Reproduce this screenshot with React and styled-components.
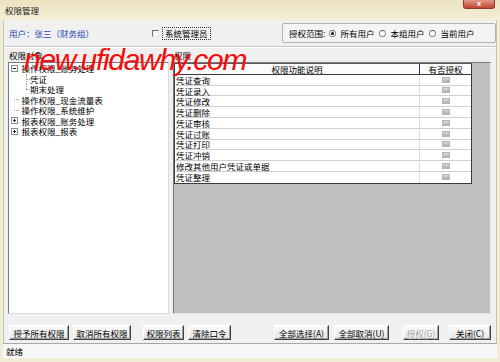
import React from "react";
import styled, { createGlobalStyle } from "styled-components";

const GlobalStyle = createGlobalStyle`
  html, body {
    margin: 0;
    padding: 0;
    background: #ffffff;
  }
  body {
    font-family: "Noto Sans CJK SC", "Noto Sans", sans-serif;
    font-size: 8.5px;
    color: #000;
  }
`;

const Window = styled.div`
  position: relative;
  width: 500px;
  height: 362px;
  box-sizing: border-box;
  display: flex;
  flex-direction: column;
  background: #f1ecd6;
  padding: 0 3px 4px 3px;
  overflow: hidden;
`;

const TitleBar = styled.div`
  flex: none;
  height: 20px;
  margin: 0 -3px;
  padding-left: 5px;
  display: flex;
  align-items: center;
  justify-content: space-between;
  background: linear-gradient(to bottom, #ebe2bf, #f4eed7);
  color: #1c1c1c;
`;

const CloseButton = styled.div`
  align-self: flex-start;
  width: 32px;
  height: 9px;
  margin-right: 5px;
  box-sizing: border-box;
  border: 1px solid #8d3a2c;
  border-top: none;
  border-radius: 0 0 3px 3px;
  background: linear-gradient(to bottom, #e2978a, #c5432f);
  color: #fff;
  font-family: "Liberation Sans", sans-serif;
  font-size: 8px;
  font-weight: bold;
  line-height: 8px;
  text-align: center;
`;

const Body = styled.div`
  flex: 1;
  display: flex;
  flex-direction: column;
  background: #f0f0f0;
  border-left: 1px solid #c9c4ad;
  border-right: 1px solid #c9c4ad;
  min-height: 0;
`;

const TopRow = styled.div`
  flex: none;
  height: 26px;
  display: flex;
  align-items: center;
  padding-left: 5px;
`;

const UserLabel = styled.span`
  color: #1f45b5;
  width: 143px;
`;

const CheckWrap = styled.label`
  display: flex;
  align-items: center;
`;

const CheckBox = styled.span`
  width: 7px;
  height: 7px;
  box-sizing: border-box;
  border-style: solid;
  border-width: 1px;
  border-color: #6c6c6c #e6e6e6 #e6e6e6 #6c6c6c;
  background: #f6f6f6;
`;

const FocusLabel = styled.span`
  margin-left: 4px;
  padding: 0 2px;
  line-height: 11px;
  outline: 1px dotted #333;
`;

const RangeGroup = styled.div`
  margin-left: auto;
  width: 214px;
  height: 20px;
  box-sizing: border-box;
  border: 1px solid #b3b3b3;
  border-radius: 2px;
  background: #f4f4f4;
  display: flex;
  align-items: center;
  padding-left: 6px;
`;

const RadioItem = styled.span`
  display: flex;
  align-items: center;
  margin-left: ${(p) => p.$ml}px;
`;

const Radio = styled.span`
  width: 7px;
  height: 7px;
  box-sizing: border-box;
  border-radius: 50%;
  border: 1px solid #8a8a8a;
  border-top-color: #5c5c5c;
  background: #fff;
  margin-right: 4px;
  display: flex;
  align-items: center;
  justify-content: center;

  &::after {
    content: "";
    display: ${(p) => (p.$checked ? "block" : "none")};
    width: 3px;
    height: 3px;
    border-radius: 50%;
    background: #111;
  }
`;

const MainPanel = styled.div`
  flex: none;
  border-top: 1px solid #c8c8c8;
  box-shadow: inset 0 1px 0 #ffffff;
  padding: 1px 5px 0 4px;
`;

const Columns = styled.div`
  display: grid;
  grid-template-columns: 161px 1fr;
  column-gap: 4px;
`;

const LabelRow = styled(Columns)`
  height: 14px;
  align-items: center;
  padding-left: 1px;
`;

const PanelRow = styled(Columns)`
  height: 252px;
`;

const TreeBox = styled.div`
  box-sizing: border-box;
  background: #fff;
  border-style: solid;
  border-width: 1px;
  border-color: #7a7a7a #dcdcdc #dcdcdc #7a7a7a;
  padding: 0 0 0 2px;
`;

const TreeRow = styled.div`
  height: 10.5px;
  display: flex;
  align-items: center;
  padding-left: ${(p) => p.$indent}px;
  white-space: nowrap;
  line-height: 10px;
`;

const Expander = styled.span`
  position: relative;
  flex: none;
  width: 7px;
  height: 7px;
  box-sizing: border-box;
  border: 1px solid #8c8c8c;
  background: #fff;
  margin-right: 3.5px;

  &::before {
    content: "";
    position: absolute;
    left: 1px;
    right: 1px;
    top: 2px;
    height: 1px;
    background: #222;
  }

  &::after {
    content: "";
    display: ${(p) => (p.$open ? "none" : "block")};
    position: absolute;
    top: 1px;
    bottom: 1px;
    left: 2px;
    width: 1px;
    background: #222;
  }
`;

const Stub = styled.span`
  flex: none;
  width: 5px;
  height: 0;
  margin: 0 2.5px 0 3px;
  border-top: 1px dotted #9a9a9a;
`;

const Connector = styled.span`
  position: relative;
  align-self: stretch;
  flex: none;
  width: 4px;
  margin-right: 0;

  &::before {
    content: "";
    position: absolute;
    left: 0;
    top: 0;
    bottom: ${(p) => (p.$last ? "50%" : "0")};
    border-left: 1px dotted #9a9a9a;
  }

  &::after {
    content: "";
    position: absolute;
    left: 0;
    right: 0;
    top: 50%;
    border-top: 1px dotted #9a9a9a;
  }
`;

const GridArea = styled.div`
  box-sizing: border-box;
  background: #c0c0c0;
  border-style: solid;
  border-width: 1px;
  border-color: #7a7a7a #e4e4e4 #e4e4e4 #7a7a7a;
`;

const Table = styled.div`
  width: 298px;
  box-sizing: border-box;
  display: grid;
  grid-template-columns: 245px 1fr;
  grid-auto-rows: 10.8px;
  border: 1px solid #3a3a3a;
  border-top-color: #5a5a5a;
  background: #fff;
`;

const HeadCell = styled.div`
  height: 11px;
  box-sizing: border-box;
  text-align: center;
  line-height: 10px;
  background: #fbfbfb;
  border-bottom: 1px solid #3a3a3a;
  border-right: ${(p) => (p.$last ? "none" : "1px solid #3a3a3a")};
`;

const Cell = styled.div`
  box-sizing: border-box;
  line-height: 10px;
  padding-left: 1px;
  border-bottom: ${(p) => (p.$lastRow ? "none" : "1px solid #cfcfcf")};
  border-right: ${(p) => (p.$check ? "none" : "1px solid #dedede")};
  display: flex;
  align-items: center;
  justify-content: ${(p) => (p.$check ? "center" : "flex-start")};
  white-space: nowrap;
`;

const GrayCheck = styled.span`
  width: 8px;
  height: 6px;
  box-sizing: border-box;
  border: 1px solid #b4b4b4;
  background: linear-gradient(to bottom, #dadada, #b0b0b0);
`;

const ButtonRow = styled.div`
  flex: none;
  height: 29px;
  box-sizing: border-box;
  padding: 11px 0 0 4px;
  display: flex;
  align-items: flex-start;
`;

const Button = styled.button`
  flex: none;
  width: ${(p) => p.$w}px;
  height: 15px;
  margin-left: ${(p) => p.$ml}px;
  padding: 0;
  box-sizing: border-box;
  font-family: inherit;
  font-size: 8.5px;
  line-height: 12px;
  white-space: nowrap;
  color: ${(p) => (p.disabled ? "#a3a3a3" : "#000")};
  text-shadow: ${(p) => (p.disabled ? "1px 1px 0 #ffffff" : "none")};
  background: linear-gradient(to bottom, #fafafa, #e6e6e6);
  border-style: solid;
  border-width: 1px;
  border-color: #ffffff #404040 #404040 #ffffff;
  box-shadow: inset -1px -1px 0 #a0a0a0;
  border-radius: 0;
`;

const StatusBar = styled.div`
  flex: none;
  height: 15px;
  box-sizing: border-box;
  margin: 0 -1px;
  border-top: 1px solid #a8a8a8;
  background: #f7f7f7;
  padding-left: 3px;
  display: flex;
  align-items: center;
`;

const Watermark = styled.div`
  position: absolute;
  left: 24px;
  top: 45px;
  font-family: "Liberation Sans", sans-serif;
  font-style: italic;
  font-size: 30px;
  line-height: 1;
  letter-spacing: -1.3px;
  color: #f40d0d;
  pointer-events: none;
  white-space: nowrap;
`;

const rows = [
  "凭证查询",
  "凭证录入",
  "凭证修改",
  "凭证删除",
  "凭证审核",
  "凭证过账",
  "凭证打印",
  "凭证冲销",
  "修改其他用户凭证或单据",
  "凭证整理",
];

const buttons = [
  { label: "授予所有权限", w: 60, ml: 1 },
  { label: "取消所有权限", w: 58, ml: 4 },
  { label: "权限列表", w: 41, ml: 12 },
  { label: "清除口令", w: 43, ml: 4 },
  { label: "全部选择(A)", w: 55, ml: 43 },
  { label: "全部取消(U)", w: 55, ml: 5 },
  { label: "授权(G)", w: 36, ml: 14, disabled: true },
  { label: "关闭(C)", w: 42, ml: 10 },
];

export default function App() {
  return (
    <>
      <GlobalStyle />
      <Window>
        <TitleBar>
          <span>权限管理</span>
          <CloseButton>x</CloseButton>
        </TitleBar>
        <Body>
          <TopRow>
            <UserLabel>用户：张三（财务组）</UserLabel>
            <CheckWrap>
              <CheckBox />
              <FocusLabel>系统管理员</FocusLabel>
            </CheckWrap>
            <RangeGroup>
              <span>授权范围:</span>
              <RadioItem $ml={4}>
                <Radio $checked />
                所有用户
              </RadioItem>
              <RadioItem $ml={5}>
                <Radio />
                本组用户
              </RadioItem>
              <RadioItem $ml={5}>
                <Radio />
                当前用户
              </RadioItem>
            </RangeGroup>
          </TopRow>
          <MainPanel>
            <LabelRow>
              <span>权限对象</span>
              <span>权限</span>
            </LabelRow>
            <PanelRow>
              <TreeBox>
                <TreeRow $indent={0}>
                  <Expander $open />
                  操作权限_账务处理
                </TreeRow>
                <TreeRow $indent={15}>
                  <Connector />
                  凭证
                </TreeRow>
                <TreeRow $indent={15}>
                  <Connector $last />
                  期末处理
                </TreeRow>
                <TreeRow $indent={0}>
                  <Stub />
                  操作权限_现金流量表
                </TreeRow>
                <TreeRow $indent={0}>
                  <Stub />
                  操作权限_系统维护
                </TreeRow>
                <TreeRow $indent={0}>
                  <Expander />
                  报表权限_账务处理
                </TreeRow>
                <TreeRow $indent={0}>
                  <Expander />
                  报表权限_报表
                </TreeRow>
              </TreeBox>
              <GridArea>
                <Table>
                  <HeadCell>权限功能说明</HeadCell>
                  <HeadCell $last>有否授权</HeadCell>
                  {rows.map((r, i) => (
                    <React.Fragment key={r}>
                      <Cell $lastRow={i === rows.length - 1}>{r}</Cell>
                      <Cell $check $lastRow={i === rows.length - 1}>
                        <GrayCheck />
                      </Cell>
                    </React.Fragment>
                  ))}
                </Table>
              </GridArea>
            </PanelRow>
          </MainPanel>
          <ButtonRow>
            {buttons.map((b) => (
              <Button key={b.label} $w={b.w} $ml={b.ml} disabled={b.disabled}>
                {b.label}
              </Button>
            ))}
          </ButtonRow>
          <StatusBar>就绪</StatusBar>
        </Body>
        <Watermark>new.ufidawhy.com</Watermark>
      </Window>
    </>
  );
}
